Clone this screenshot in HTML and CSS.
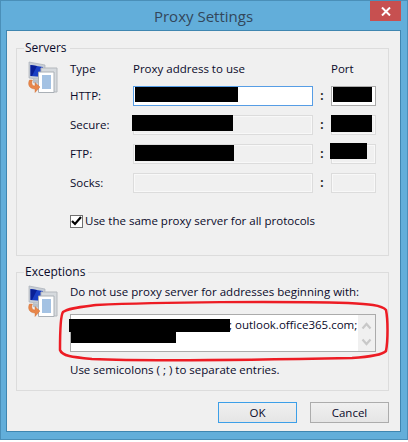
FILE: index.html
```html
<!DOCTYPE html>
<html lang="en">
<head>
<meta charset="utf-8">
<title>Proxy Settings</title>
<link rel="stylesheet" href="styles.css">
</head>
<body>
<div class="window">
  <header class="titlebar">
    <span class="title">Proxy Settings</span>
    <span class="close"><svg width="10" height="9" viewBox="0 0 10 9"><path d="M1 .5 L9 8.5 M9 .5 L1 8.5" stroke="#fff" stroke-width="2" fill="none"/></svg></span>
  </header>
  <main class="client">
    <fieldset class="group servers">
      <legend>Servers</legend>
      <svg class="icon" width="33" height="33" viewBox="0 0 33 33">
        <path d="M3 1 L19 4 V19 L3 17Z" fill="#c8ced6" stroke="#a9afb8" stroke-width=".7"/>
        <path d="M4.500 4 L17 6 V16 L4.500 15Z" fill="#1a3fc4"/>
        <path d="M4.500 4 L11 5 L6 15 H4.500Z" fill="#0a1f96"/>
        <path d="M7 18 L15 19 V23 L7 22Z" fill="#b9bfc7"/>
        <path d="M15 7 H31 V31 H15Z" fill="#d6dade" stroke="#b4b8bd"/>
        <path d="M12.500 11 H28 V31.500 H12.500Z" fill="#fff" stroke="#aab0b6"/>
        <path d="M16 15 H25 M16 17 H25 M16 19 H25 M16 21 H25 M16 23 H25 M16 25 H25 M16 27 H25" stroke="#4a86c8" stroke-width="1.100"/>
        <path d="M3.500 19 C1 24 4 28 9 28 L9 31.500 L14 26 L9 21.500 V25 C6 25 5 22 6.500 19Z" fill="#e8864a" stroke="#c96a30" stroke-width=".4"/>
      </svg>
      <div class="server-grid">
        <span class="head">Type</span><span class="head">Proxy address to use</span><span></span><span class="head">Port</span>

        <label class="row-label">HTTP:</label>
        <div class="field focused"><i class="ink ink-http"></i></div>
        <span class="colon">:</span>
        <div class="field port-active"><i class="ink ink-p1"></i></div>

        <label class="row-label">Secure:</label>
        <div class="field"><i class="ink ink-secure"></i></div>
        <span class="colon">:</span>
        <div class="field"><i class="ink ink-p2"></i></div>

        <label class="row-label">FTP:</label>
        <div class="field"><i class="ink ink-ftp"></i></div>
        <span class="colon">:</span>
        <div class="field"><i class="ink ink-p3"></i></div>

        <label class="row-label">Socks:</label>
        <div class="field"></div>
        <span class="colon">:</span>
        <div class="field"></div>
      </div>
      <div class="check-row">
        <span class="checkbox"><svg width="11" height="10" viewBox="0 0 11 10"><path d="M1 5 L4 8 L10 1" stroke="#000" stroke-width="2.200" fill="none"/></svg></span>
        <span>Use the same proxy server for all protocols</span>
      </div>
    </fieldset>
    <fieldset class="group exceptions">
      <legend>Exceptions</legend>
      <svg class="icon" width="33" height="33" viewBox="0 0 33 33">
        <path d="M3 1 L19 4 V19 L3 17Z" fill="#c8ced6" stroke="#a9afb8" stroke-width=".7"/>
        <path d="M4.500 4 L17 6 V16 L4.500 15Z" fill="#1a3fc4"/>
        <path d="M4.500 4 L11 5 L6 15 H4.500Z" fill="#0a1f96"/>
        <path d="M7 18 L15 19 V23 L7 22Z" fill="#b9bfc7"/>
        <path d="M15 7 H31 V31 H15Z" fill="#d6dade" stroke="#b4b8bd"/>
        <path d="M12.500 11 H28 V31.500 H12.500Z" fill="#fff" stroke="#aab0b6"/>
        <path d="M16 15 H25 M16 17 H25 M16 19 H25 M16 21 H25 M16 23 H25 M16 25 H25 M16 27 H25" stroke="#4a86c8" stroke-width="1.100"/>
        <path d="M3.500 19 C1 24 4 28 9 28 L9 31.500 L14 26 L9 21.500 V25 C6 25 5 22 6.500 19Z" fill="#e8864a" stroke="#c96a30" stroke-width=".4"/>
      </svg>
      <div class="exc-body">
        <p class="exc-line">Do not use proxy server for addresses beginning with:</p>
        <div class="textarea">
          <i class="ink ink-t1"></i><i class="ink ink-t2"></i>
          <span class="area-text">; outlook.office365.com;</span>
          <span class="scroll">
            <svg width="11" height="8" viewBox="0 0 11 8"><path d="M1.500 6.500 L5.500 2 L9.500 6.500" stroke="#c8c8c8" stroke-width="2.200" fill="none"/></svg>
            <svg width="11" height="8" viewBox="0 0 11 8"><path d="M1.500 1.500 L5.500 6 L9.500 1.500" stroke="#c8c8c8" stroke-width="2.200" fill="none"/></svg>
          </span>
        </div>
        <p class="exc-hint">Use semicolons ( ; ) to separate entries.</p>
      </div>
    </fieldset>
    <footer class="buttons">
      <button class="btn default">OK</button>
      <button class="btn">Cancel</button>
    </footer>
    <svg class="scribble" width="408" height="442" viewBox="0 0 408 442">
      <path d="M96 305 C80 307 68 308 63 312 C60 316 60 340 60 350 C62 356 72 357 92 359 C140 361 250 360 352 358 C368 357 382 355 386 351 C388 340 388 320 386 310 C382 305 368 304 348 303 C280 301 160 302 96 305Z" fill="none" stroke="#ed1c24" stroke-width="2.500"/>
    </svg>
  </main>
</div>
</body>
</html>
```
FILE: styles.css
```css
* { box-sizing: border-box; }
html, body { margin: 0; padding: 0; background: #fff; }
body {
  width: 408px;
  height: 442px;
  overflow: hidden;
  font-family: "Open Sans", "Noto Sans", sans-serif;
  font-size: 11.5px;
  line-height: 16px;
  color: #0a0a2a;
}
.window {
  width: 408px;
  height: 440px;
  background: #62aeda;
  border: 1px solid #4a8fb8;
  padding: 0 6px 7px 5px;
  display: flex;
  flex-direction: column;
}
.titlebar {
  height: 29px;
  flex: none;
  display: flex;
  justify-content: center;
  position: relative;
}
.title {
  font-size: 15px;
  line-height: 30px;
  color: #33475a;
}
.close {
  position: absolute;
  top: 0;
  right: 0;
  width: 31px;
  height: 20px;
  background: #c75050;
  display: flex;
  align-items: center;
  justify-content: center;
}
.client {
  flex: 1;
  background: #f0f0f0;
  border: 1px solid #3f86b0;
  padding: 9px 11px 0 9px;
  display: flex;
  flex-direction: column;
}
.group {
  margin: 0;
  border: 1px solid #dcdcdc;
  padding: 0;
  position: relative;
  min-width: 0;
}
.group legend {
  margin-left: 7px;
  padding: 0 3px 0 1px;
  line-height: 16px;
  font-size: 12px;
}
.servers { height: 216px; }
.exceptions { height: 127px; margin-top: 8px; }
.icon { position: absolute; left: 9px; top: 5px; }
.server-grid {
  display: grid;
  grid-template-columns: 63px 180px 18px 45px;
  grid-template-rows: 17px 20px 20px 20px 20px;
  row-gap: 9px;
  margin: 4px 0 0 53px;
  align-items: center;
}
.server-grid .head { align-self: center; }
.server-grid > :nth-child(-n+4) { margin-bottom: 0; }
.row-label { display: block; }
.field {
  position: relative;
  height: 20px;
  border: 1px solid #dcdcdc;
  box-shadow: inset 0 0 0 1px #f8f8f8;
  background: #f0f0f0;
}
.field.focused { border-color: #569de5; box-shadow: none; background: #fff; }
.field.port-active { border-color: #ababab; box-shadow: none; background: #fff; }
.colon { text-align: center; font-weight: 700; color: #222; }
.ink { position: absolute; background: #000; display: block; }
.ink-http { left: 1px; top: 0; width: 103px; height: 15px; }
.ink-secure { left: -2px; top: -1px; width: 101px; height: 16px; }
.ink-ftp { left: 1px; top: 0; width: 99px; height: 16px; }
.ink-p1 { left: 1px; top: 0; width: 39px; height: 15px; }
.ink-p2 { left: -1px; top: -1px; width: 41px; height: 17px; }
.ink-p3 { left: -2px; top: -2px; width: 37px; height: 16px; }
.check-row {
  display: flex;
  align-items: center;
  gap: 2px;
  margin: 20px 0 0 53px;
}
.checkbox {
  width: 13px;
  height: 13px;
  border: 1px solid #707070;
  background: #fff;
  display: flex;
  align-items: center;
  justify-content: center;
}
.exc-body { margin: 4px 0 0 53px; position: relative; }
.exc-line, .exc-hint { margin: 0; }
.exc-hint { margin-top: 10px; }
.textarea {
  position: relative;
  margin-top: 14px;
  width: 306px;
  height: 38px;
  border: 1px solid #ababab;
  background: #fff;
  padding: 1px 0 0 158px;
}
.ink-t1 { left: -2px; top: 4px; width: 161px; height: 13px; }
.ink-t2 { left: 0; top: 16px; width: 105px; height: 12px; }
.area-text { font-size: 11.5px; line-height: 18px; }
.scroll {
  position: absolute;
  right: 0;
  top: 0;
  bottom: 0;
  width: 17px;
  background: #f0f0f0;
  display: flex;
  flex-direction: column;
  justify-content: space-between;
  align-items: center;
  padding: 7px 0 5px;
}
.buttons {
  display: flex;
  justify-content: flex-end;
  gap: 13px;
  margin-top: 11px;
}
.btn {
  width: 79px;
  height: 21px;
  padding: 0;
  border: 1px solid #acacac;
  background: linear-gradient(#f0f0f0, #e5e5e5);
  font: inherit;
  color: inherit;
}
.btn.default { border-color: #3c9fe8; }
.scribble { position: absolute; left: 0; top: 0; pointer-events: none; }
```
